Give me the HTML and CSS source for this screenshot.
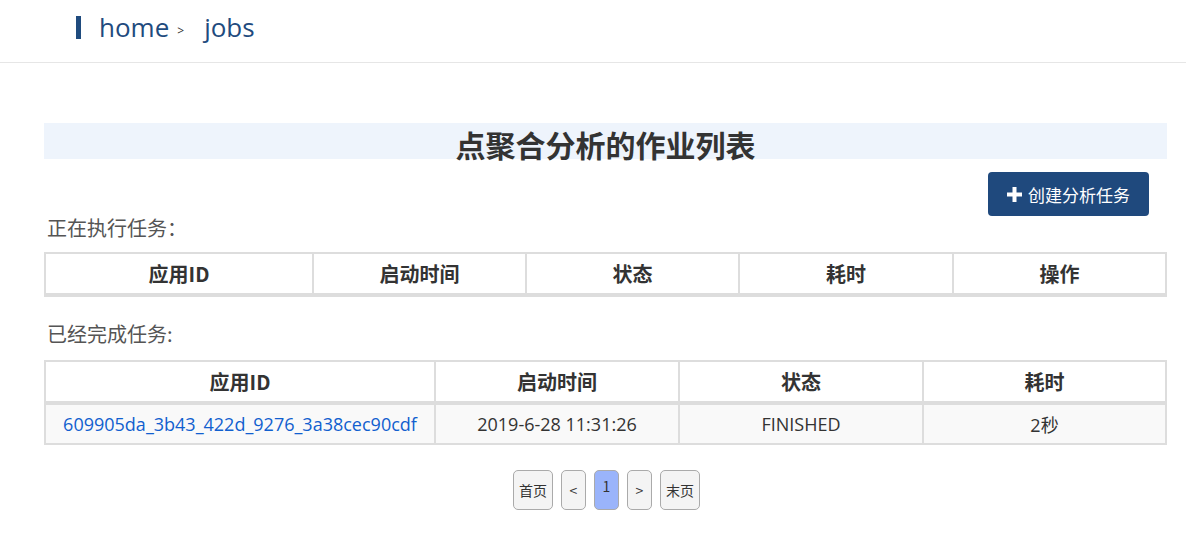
FILE: index.html
```html
<!DOCTYPE html>
<html lang="zh">
<head>
    <meta charset="UTF-8">
    <title>jobs</title>
    <link rel="stylesheet" href="styles.css">
</head>
<body>
    <div class="topbar">
        <span class="mark"></span>
        <a class="crumb" href="#">home</a>
        <span class="sep">&gt;</span>
        <span class="crumb">jobs</span>
    </div>

    <div class="main">
        <h2 class="title">点聚合分析的作业列表</h2>

        <div class="toolbar">
            <button class="btn-create">
                <svg width="15" height="15" viewBox="0 0 15 15"><path d="M5.5 0h4v5.5H15v4H9.5V15h-4V9.5H0v-4h5.5z" fill="#fff"/></svg>
                创建分析任务
            </button>
        </div>

        <p class="section">正在执行任务：</p>
        <table class="grid running">
            <colgroup>
                <col class="w268">
                <col class="w213">
                <col class="w213">
                <col class="w214">
                <col>
            </colgroup>
            <thead>
                <tr>
                    <th>应用ID</th>
                    <th>启动时间</th>
                    <th>状态</th>
                    <th>耗时</th>
                    <th>操作</th>
                </tr>
            </thead>
        </table>

        <p class="section second">已经完成任务:</p>
        <table class="grid done">
            <colgroup>
                <col class="w390">
                <col class="w244">
                <col class="w244">
                <col>
            </colgroup>
            <thead>
                <tr>
                    <th>应用ID</th>
                    <th>启动时间</th>
                    <th>状态</th>
                    <th>耗时</th>
                </tr>
            </thead>
            <tbody>
                <tr>
                    <td><a href="#">609905da_3b43_422d_9276_3a38cec90cdf</a></td>
                    <td>2019-6-28 11:31:26</td>
                    <td>FINISHED</td>
                    <td>2秒</td>
                </tr>
            </tbody>
        </table>

        <div class="pager">
            <button class="pg">首页</button>
            <button class="pg small">&lt;</button>
            <button class="pg small active">1</button>
            <button class="pg small">&gt;</button>
            <button class="pg">末页</button>
        </div>
    </div>
</body>
</html>
```

FILE: styles.css
```css
* {
    box-sizing: border-box;
}

body {
    margin: 0;
    font-family: "Open Sans", "Noto Sans CJK SC", sans-serif;
    color: #333;
    background: #fff;
}

.topbar {
    height: 63px;
    border-bottom: 1px solid #e6e6e6;
    display: flex;
    align-items: center;
    padding-left: 76px;
    padding-bottom: 8px;
}

.mark {
    width: 5px;
    height: 23px;
    background: #1f4b7e;
    margin-right: 18px;
}

.crumb {
    font-size: 26px;
    color: #1f4b7e;
    text-decoration: none;
}

.sep {
    font-size: 12px;
    color: #333;
    margin: 6px 20px 0 8px;
}

.main {
    padding: 60px 19px 0 44px;
}

.title {
    margin: 0;
    height: 36px;
    background: #eef4fc;
    text-align: center;
    font-family: "Noto Sans CJK SC", sans-serif;
    font-size: 30px;
    font-weight: 700;
    line-height: 42px;
    color: #333;
}

.toolbar {
    display: flex;
    justify-content: flex-end;
    padding-right: 18px;
    margin-top: 13px;
}

.btn-create {
    height: 44px;
    width: 161px;
    background: #1f497d;
    border: none;
    border-radius: 4px;
    color: #fff;
    font-family: "Noto Sans CJK SC", sans-serif;
    font-size: 17px;
    display: flex;
    align-items: center;
    justify-content: center;
    gap: 6px;
}

.section {
    margin: 0;
    font-family: "Noto Sans CJK SC", serif;
    font-size: 20px;
    color: #555;
    padding-left: 3px;
    line-height: 24px;
}

.section.second {
    margin-top: 25px;
}

.running {
    margin-top: 12px;
}

.done {
    margin-top: 14px;
}

.grid {
    width: 100%;
    table-layout: fixed;
    border-collapse: collapse;
    border: 2px solid #ddd;
}

.w268 { width: 268px; }
.w213 { width: 213px; }
.w214 { width: 214px; }
.w390 { width: 390px; }
.w244 { width: 244px; }

.grid th,
.grid td {
    border: 2px solid #ddd;
    text-align: center;
    padding: 0 8px;
}

.grid th {
    height: 42px;
    font-family: "Noto Sans CJK SC", sans-serif;
    font-size: 20px;
    font-weight: 700;
    border-bottom-width: 4px;
}

.grid td {
    height: 41px;
    font-size: 18px;
    background: #f9f9f9;
    white-space: nowrap;
}

.grid td a {
    color: #1160cf;
    text-decoration: none;
}

.pager {
    display: flex;
    justify-content: center;
    gap: 8px;
    margin-top: 25px;
    padding-left: 2px;
}

.pg {
    height: 40px;
    min-width: 40px;
    padding: 0 3px;
    border: 1px solid #aaa;
    border-radius: 5px;
    background: #f4f4f4;
    font-family: "Noto Sans CJK SC", sans-serif;
    font-size: 14px;
    color: #333;
}

.pg.small {
    min-width: 25px;
    width: 25px;
    padding: 0;
}

.pg.active {
    background: #9ab4fb;
    padding-bottom: 8px;
}
```
